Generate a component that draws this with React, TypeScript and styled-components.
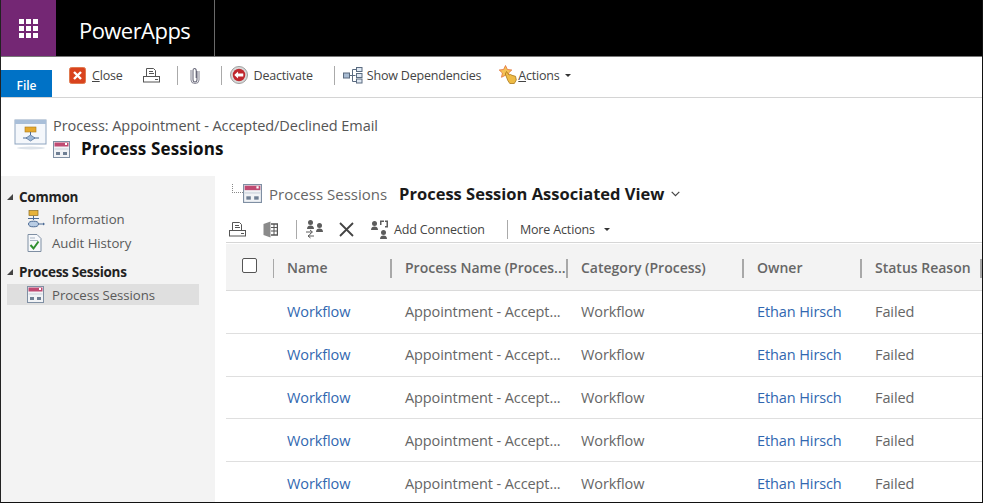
import React from "react";
import styled, { createGlobalStyle } from "styled-components";

const GlobalStyle = createGlobalStyle`
  html, body { margin: 0; padding: 0; background: #fff; }
  body { font-family: "Open Sans", "Noto Sans", sans-serif; color: #444; }
`;

const Page = styled.div`
  width: 983px;
  height: 503px;
  overflow: hidden;
  display: flex;
  flex-direction: column;
  box-sizing: border-box;
  border-left: 1px solid #222;
  border-right: 1px solid #111;
  border-bottom: 1px solid #111;
`;

const TopBar = styled.header`
  height: 57px;
  flex: none;
  box-sizing: border-box;
  background: #000;
  border-bottom: 1px solid #777;
  display: flex;
`;

const AppTile = styled.div`
  width: 55px;
  background: #742774;
  display: flex;
  align-items: center;
  justify-content: center;
`;

const AppName = styled.div`
  width: 159px;
  box-sizing: border-box;
  padding-left: 23px;
  border-right: 1px solid #6a6a6a;
  color: #fff;
  font-size: 22px;
  letter-spacing: -0.55px;
  line-height: 60px;
`;

const Ribbon = styled.div`
  height: 41px;
  flex: none;
  box-sizing: border-box;
  border-bottom: 1px solid #d4d4d4;
  display: flex;
  align-items: flex-start;
`;

const FileTab = styled.div`
  width: 51px;
  height: 27px;
  margin-top: 13px;
  padding-top: 3px;
  box-sizing: border-box;
  background: #0072c6;
  color: #fff;
  font-size: 12px;
  font-weight: 600;
  display: flex;
  align-items: center;
  justify-content: center;
`;

const RibbonItems = styled.div`
  display: flex;
  align-items: center;
  height: 36px;
`;

const Tool = styled.div<{ $left?: number; $gap?: number }>`
  display: flex;
  align-items: center;
  gap: ${(p) => p.$gap ?? 6}px;
  margin-left: ${(p) => p.$left ?? 0}px;
  font-size: 12.5px;
  letter-spacing: -0.2px;
  color: #444;
  white-space: nowrap;
`;

const ActionsLabel = styled.span`
  margin-left: -6px;
`;

const Sep = styled.span<{ $left: number; $h?: number }>`
  width: 1px;
  height: ${(p) => p.$h ?? 19}px;
  background: #aaa;
  margin-left: ${(p) => p.$left}px;
  flex: none;
`;

const Caret = styled.span<{ $left?: number }>`
  width: 0;
  height: 0;
  margin-left: ${(p) => p.$left ?? 5}px;
  border-left: 3px solid transparent;
  border-right: 3px solid transparent;
  border-top: 3px solid #333;
`;

const RecordHeader = styled.div`
  height: 78px;
  flex: none;
  display: flex;
  padding: 19px 0 0 12px;
  box-sizing: border-box;
`;

const HeaderText = styled.div`
  margin-left: 4px;
`;

const Breadcrumb = styled.div`
  font-size: 14.5px;
  letter-spacing: -0.07px;
  line-height: 18px;
  color: #555;
`;

const TitleRow = styled.div`
  display: flex;
  align-items: center;
  gap: 11px;
  margin-top: 3px;
`;

const Title = styled.h1`
  margin: 0;
  font-size: 17px;
  font-weight: 700;
  letter-spacing: 0.12px;
  line-height: 22px;
  color: #111;
`;

const Body = styled.div`
  flex: 1;
  min-height: 0;
  display: flex;
`;

const Sidebar = styled.nav`
  width: 214px;
  flex: none;
  background: #f3f3f3;
  padding: 11px 0 0 6px;
  box-sizing: border-box;
`;

const SectionHead = styled.div<{ $top?: number }>`
  display: flex;
  align-items: center;
  gap: 6px;
  height: 20px;
  margin-top: ${(p) => p.$top ?? 0}px;
  font-size: 13.5px;
  font-weight: 700;
  letter-spacing: -0.25px;
  color: #222;
`;

const Tri = styled.span`
  width: 0;
  height: 0;
  border-left: 6px solid transparent;
  border-bottom: 6px solid #444;
`;

const NavItem = styled.div<{ $active?: boolean }>`
  width: 192px;
  height: ${(p) => (p.$active ? 21 : 24)}px;
  margin-top: ${(p) => (p.$active ? 2 : 0)}px;
  box-sizing: border-box;
  padding-left: 20px;
  display: flex;
  align-items: center;
  background: ${(p) => (p.$active ? "#dfdfdf" : "transparent")};
  font-size: 13.2px;
  letter-spacing: -0.05px;
  color: #595959;
`;

const NavIcon = styled.span`
  width: 25px;
  flex: none;
  display: flex;
  align-items: center;
`;

const Main = styled.main`
  flex: 1;
  min-width: 0;
  padding-left: 11px;
  display: flex;
  flex-direction: column;
`;

const ViewBar = styled.div`
  height: 35px;
  display: flex;
  align-items: center;
  padding-left: 6px;
  flex: none;
`;

const TreeDots = styled.span`
  width: 11px;
  height: 9px;
  margin-top: -10px;
  border-left: 1px dotted #888;
  border-bottom: 1px dotted #888;
  box-sizing: border-box;
`;

const ViewEntity = styled.span`
  margin-left: 7px;
  font-size: 15px;
  color: #666;
`;

const ViewName = styled.span`
  margin-left: 12px;
  font-size: 16.5px;
  font-weight: 700;
  color: #1a1a1a;
`;

const ChevronWrap = styled.span`
  margin-left: 7px;
  display: flex;
`;

const GridBar = styled.div`
  height: 32px;
  flex: none;
  box-sizing: border-box;
  border-bottom: 1px solid #d6d6d6;
  display: flex;
  align-items: center;
  padding: 5px 0 0 3px;
`;

const GridTool = styled(Tool)`
  letter-spacing: -0.15px;
`;

const Grid = styled.div`
  display: grid;
  grid-template-columns: 48px 118px 176px 176px 118px 1fr;
`;

const HeadCell = styled.div<{ $sep?: boolean }>`
  height: 47px;
  margin-top: 1px;
  box-sizing: border-box;
  background: #f3f3f3;
  border-bottom: 1px solid #dadada;
  display: flex;
  align-items: center;
  padding: 0 0 0 13px;
  position: relative;
  font-size: 14px;
  font-weight: 600;
  letter-spacing: 0;
  color: #666;
  white-space: nowrap;
  &::after {
    content: "";
    display: ${(p) => (p.$sep === false ? "none" : "block")};
    position: absolute;
    right: 0;
    top: 15px;
    width: 2px;
    height: 19px;
    background: #a8a8a8;
  }
`;

const CheckCell = styled(HeadCell)`
  padding: 0 0 0 16px;
  &::after {
    right: -1px;
  }
`;

const CheckBox = styled.span`
  width: 15px;
  height: 15px;
  margin-top: -3px;
  box-sizing: border-box;
  border: 1px solid #555;
  border-radius: 2px;
  background: #fff;
`;

const Cell = styled.div<{ $link?: boolean }>`
  height: 42.8px;
  box-sizing: border-box;
  border-bottom: 1px solid #dfdfdf;
  display: flex;
  align-items: center;
  padding: 0 0 0 13px;
  font-size: 14.5px;
  letter-spacing: -0.1px;
  color: ${(p) => (p.$link ? "#3167b0" : "#666")};
  white-space: nowrap;
`;

const Waffle = () => (
  <svg width="19" height="19" viewBox="0 0 19 19" fill="#fff">
    {[0, 7, 14].map((y) =>
      [0, 7, 14].map((x) => <rect key={`${x}-${y}`} x={x} y={y} width="5" height="5" />)
    )}
  </svg>
);

const CloseIcon = () => (
  <svg width="17" height="17" viewBox="0 0 17 17">
    <rect x="0.5" y="0.5" width="16" height="16" rx="2" fill="#d9431e" stroke="#e07a50" />
    <path d="M5 5l7 7M12 5l-7 7" stroke="#fff" strokeWidth="2.4" />
  </svg>
);

const PrintIcon = () => (
  <svg width="17" height="15" viewBox="0 0 17 15" fill="none" stroke="#555">
    <path d="M3.500 8V0.500h7l2 2V8" />
    <rect x="0.500" y="8.500" width="16" height="5.500" />
    <path d="M6 3.500h4M6 5.500h5" />
    <path d="M12 11.500h3" />
  </svg>
);

const ClipIcon = () => (
  <svg width="10" height="17" viewBox="0 0 10 17" fill="none" stroke="#667">
    <path d="M7 4v8.500a2 2.500 0 0 1-4 0V3.500a1.600 2 0 0 1 3.200 0V11" strokeWidth="1.100" />
    <path d="M9 4v9a4 3.500 0 0 1-8 0V3" strokeWidth="0.800" />
  </svg>
);

const DeactivateIcon = () => (
  <svg width="18" height="18" viewBox="0 0 19 19">
    <circle cx="9.5" cy="9.5" r="9" fill="#d9d9d9" stroke="#999" />
    <circle cx="9.5" cy="9.5" r="6.6" fill="#c0272d" />
    <path d="M4.5 9.5l4-3.6v2h5.5v3.2H8.5v2z" fill="#fff" />
  </svg>
);

const DependenciesIcon = () => (
  <svg width="20" height="17" viewBox="0 0 20 17" fill="#dfe8f2" stroke="#5a6b80">
    <rect x="0.5" y="6" width="6" height="5" fill="#a9bcd2" />
    <rect x="13.5" y="0.5" width="5.5" height="4" />
    <rect x="13.5" y="6.5" width="5.5" height="4" />
    <rect x="13.5" y="12" width="5.5" height="4" />
    <path d="M7 8.500h5.500M9.500 2.500h3.500M9.500 2.500v12h3.500" fill="none" />
  </svg>
);

const ActionsIcon = () => (
  <svg width="20" height="20" viewBox="0 0 20 20">
    <path d="M6.500 0.500l1.900 4 4.400.5-3.200 3 .9 4.300-4-2.100-4 2.100.9-4.300-3.200-3 4.400-.5z" fill="#f5c255" stroke="#e2703a" strokeWidth="0.8" />
    <path d="M7.500 6.500l2.500 3.500 1.500-.5 1.500.8 3.500 1 .8 3.700-2 3.500h-4.500l-2-3-2.500-6.500z" fill="#eebb45" stroke="#a9771a" strokeWidth="0.8" />
  </svg>
);

const ProcessIcon = () => (
  <svg width="36" height="34" viewBox="0 0 36 34">
    <rect x="2" y="3" width="31" height="24" fill="#f4f7fb" stroke="#8fa5c0" />
    <rect x="2" y="3" width="31" height="4" fill="#a9bfd9" />
    <rect x="12" y="10" width="11" height="5" fill="#e6a92e" stroke="#a97a1a" strokeWidth="0.6" />
    <path d="M17.5 15v3M10 21h4M21 21h5" stroke="#4b6a94" />
    <path d="M13 21l4.500-3 4.500 3-4.500 3z" fill="#9db8d8" stroke="#4b6a94" strokeWidth="0.7" />
    <ellipse cx="18" cy="31" rx="14" ry="1.500" fill="#dde3ea" />
  </svg>
);

const SessionIcon = ({ size = 17 }: { size?: number }) => (
  <svg width={size} height={size} viewBox="0 0 17 17">
    <rect x="0.5" y="0.5" width="16" height="16" fill="#f1f3f6" stroke="#7f8fa3" />
    <rect x="1.500" y="1.500" width="14" height="4" fill="#c04a72" />
    <rect x="12" y="2" width="2" height="2" fill="#fff" />
    <rect x="1.500" y="7.500" width="14" height="1" fill="#c9d0da" />
    <rect x="3" y="11" width="4" height="3" fill="#6f7f94" />
    <rect x="10" y="11" width="4" height="3" fill="#6f7f94" />
  </svg>
);

const InfoIcon = () => (
  <svg width="19" height="18" viewBox="0 0 19 18">
    <rect x="2" y="0.5" width="9" height="5" fill="#e6b23a" stroke="#8a6a1e" strokeWidth="0.7" />
    <path d="M6.500 6v4M1 8.500h11" stroke="#4b6a94" />
    <ellipse cx="6.500" cy="14" rx="5" ry="2.800" fill="#b9cde4" stroke="#4b6a94" />
    <path d="M12 14h5" stroke="#4b6a94" />
    <path d="M16 12.500l2 1.500-2 1.500z" fill="#4b6a94" />
  </svg>
);

const AuditIcon = () => (
  <svg width="15" height="18" viewBox="0 0 15 18">
    <path d="M1 0.500h9l4 4v13H1z" fill="#f6f8fb" stroke="#7f8fa3" />
    <path d="M3 4h5M3 6.500h8" stroke="#a9b5c4" />
    <path d="M3.500 11l3 3.500 5-7" fill="none" stroke="#2f8f2f" strokeWidth="2" />
  </svg>
);

const ExcelIcon = () => (
  <svg width="15" height="17" viewBox="0 0 15 17" fill="none">
    <path d="M0.500 3l7-2.500v16l-7-2.500z" fill="#8a8a8a" />
    <path d="M8 3h6.500v11H8" stroke="#555" strokeWidth="1.400" />
    <path d="M8 6.500h6M8 10h6M11 3v11" stroke="#555" />
  </svg>
);

const Person = ({ x, y }: { x: number; y: number }) => (
  <g transform={`translate(${x} ${y})`}>
    <circle cx="3.500" cy="2.500" r="2.500" />
    <path d="M0 9c0-2.500 1.500-3.500 3.500-3.500S7 6.500 7 9z" />
  </g>
);

const ConnectIcon = () => (
  <svg width="19" height="19" viewBox="0 0 19 19" fill="#5c5c5c">
    <Person x={2} y={0} />
    <Person x={11} y={3} />
    <path d="M1 12h6M5 10l2.500 2L5 14M9 16H3M5.500 14L3 16l2.500 2" fill="none" stroke="#5c5c5c" />
  </svg>
);

const CrossIcon = () => (
  <svg width="15" height="15" viewBox="0 0 15 15">
    <path d="M1 1l13 13M14 1L1 14" stroke="#444" strokeWidth="1.800" />
  </svg>
);

const AddConnectionIcon = () => (
  <svg width="19" height="19" viewBox="0 0 19 19" fill="#5c5c5c">
    <Person x={1} y={1} />
    <Person x={10} y={10} />
    <path d="M10 0.500h4v1.500h-2.500v3H10zM15 0.500h3v7h-3V6h1.500V2H15z" />
  </svg>
);

const Chevron = () => (
  <svg width="9" height="6" viewBox="0 0 9 6" fill="none">
    <path d="M0.700 0.800L4.500 4.600L8.300 0.800" stroke="#444" strokeWidth="1.200" />
  </svg>
);

const rows = [0, 1, 2, 3, 4];

export default function App() {
  return (
    <Page>
      <GlobalStyle />
      <TopBar>
        <AppTile>
          <Waffle />
        </AppTile>
        <AppName>PowerApps</AppName>
      </TopBar>

      <Ribbon>
        <FileTab>File</FileTab>
        <RibbonItems>
          <Tool $left={17}>
            <CloseIcon />
            <span>
              <u>C</u>lose
            </span>
          </Tool>
          <Tool $left={20}>
            <PrintIcon />
          </Tool>
          <Sep $left={17} />
          <Tool $left={12}>
            <ClipIcon />
          </Tool>
          <Sep $left={21} />
          <Tool $left={8}>
            <DeactivateIcon />
            <span>Deactivate</span>
          </Tool>
          <Sep $left={21} />
          <Tool $left={8} $gap={4}>
            <DependenciesIcon />
            <span>Show Dependencies</span>
          </Tool>
          <Tool $left={18} $gap={5}>
            <ActionsIcon />
            <ActionsLabel>
              <u>A</u>ctions
            </ActionsLabel>
            <Caret $left={0} />
          </Tool>
        </RibbonItems>
      </Ribbon>

      <RecordHeader>
        <ProcessIcon />
        <HeaderText>
          <Breadcrumb>Process: Appointment - Accepted/Declined Email</Breadcrumb>
          <TitleRow>
            <SessionIcon />
            <Title>Process Sessions</Title>
          </TitleRow>
        </HeaderText>
      </RecordHeader>

      <Body>
        <Sidebar>
          <SectionHead>
            <Tri />
            Common
          </SectionHead>
          <NavItem>
            <NavIcon>
              <InfoIcon />
            </NavIcon>
            Information
          </NavItem>
          <NavItem>
            <NavIcon>
              <AuditIcon />
            </NavIcon>
            Audit History
          </NavItem>
          <SectionHead $top={7}>
            <Tri />
            Process Sessions
          </SectionHead>
          <NavItem $active>
            <NavIcon>
              <SessionIcon />
            </NavIcon>
            Process Sessions
          </NavItem>
        </Sidebar>

        <Main>
          <ViewBar>
            <TreeDots />
            <SessionIcon size={19} />
            <ViewEntity>Process Sessions</ViewEntity>
            <ViewName>Process Session Associated View</ViewName>
            <ChevronWrap>
              <Chevron />
            </ChevronWrap>
          </ViewBar>
          <GridBar>
            <PrintIcon />
            <Tool $left={17}>
              <ExcelIcon />
            </Tool>
            <Sep $left={18} />
            <Tool $left={8}>
              <ConnectIcon />
            </Tool>
            <Tool $left={15}>
              <CrossIcon />
            </Tool>
            <GridTool $left={16} $gap={5}>
              <AddConnectionIcon />
              <span>Add Connection</span>
            </GridTool>
            <Sep $left={22} />
            <GridTool $left={12}>
              <span>More Actions</span>
              <Caret $left={3} />
            </GridTool>
          </GridBar>
          <Grid>
            <CheckCell>
              <CheckBox />
            </CheckCell>
            <HeadCell>Name</HeadCell>
            <HeadCell>Process Name (Proces...</HeadCell>
            <HeadCell>Category (Process)</HeadCell>
            <HeadCell>Owner</HeadCell>
            <HeadCell>Status Reason</HeadCell>
            {rows.map((r) => (
              <React.Fragment key={r}>
                <Cell />
                <Cell $link>Workflow</Cell>
                <Cell>Appointment - Accept...</Cell>
                <Cell>Workflow</Cell>
                <Cell $link>Ethan Hirsch</Cell>
                <Cell>Failed</Cell>
              </React.Fragment>
            ))}
          </Grid>
        </Main>
      </Body>
    </Page>
  );
}
